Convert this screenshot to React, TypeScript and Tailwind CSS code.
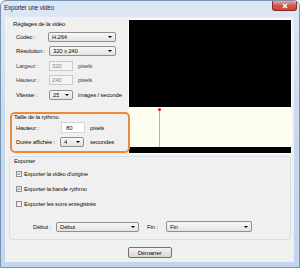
import clsx from 'clsx';

function Arrow() {
  return <span className="ml-auto w-0 h-0 border-x-[2px] border-t-[2.5px] border-x-transparent border-t-black" />;
}

function Combo({ value, className }: { value: string; className?: string }) {
  return (
    <div
      className={clsx(
        'flex items-center border border-[#8e8f8f] rounded-[2px] bg-linear-to-b from-[#f8f8f8] to-[#e3e3e3] pl-[3px] pr-[3px]',
        className,
      )}
    >
      <span className="truncate">{value}</span>
      <Arrow />
    </div>
  );
}

function TextBox({ value, disabled, className }: { value: string; disabled?: boolean; className?: string }) {
  return (
    <div
      className={clsx(
        'flex items-center border pl-[2px]',
        disabled ? 'border-[#c9c9c9] bg-[#f4f4f4] text-[#8a8a8a]' : 'border-[#d6d6d6] bg-white',
        className,
      )}
    >
      {value}
    </div>
  );
}

function CheckBox({ label, checked, className }: { label: string; checked?: boolean; className?: string }) {
  return (
    <div className={clsx('h-[8px] flex items-center gap-[2px] pl-[6px]', className)}>
      <span className="w-[6px] h-[6px] border border-[#8f8f8f] bg-linear-to-br from-[#dcdcdc] to-white flex items-center justify-center">
        {checked && (
          <svg width="6" height="6" viewBox="0 0 6 6">
            <path d="M1 3.1 L2.4 4.5 L5 1.3" stroke="#2c4377" strokeWidth="1" fill="none" />
          </svg>
        )}
      </span>
      <span>{label}</span>
    </div>
  );
}

export default function App() {
  return (
    <div className="w-[300px] h-[268px] flex flex-col overflow-hidden rounded-t-[6px] border border-[#7a93b3] bg-linear-to-b from-[#dde8f5] via-[#c8d9ee] to-[#c2d5ec] font-['Liberation_Sans',Arial,sans-serif] text-[6px] leading-none tracking-[-0.2px] text-[#111]">
      {/* Title bar */}
      <div className="h-[16px] shrink-0 flex items-start">
        <span className="mt-[4px] ml-[3px] text-[6.4px] text-[#1b2a3e]">Exporter une vidéo</span>
        <div className="ml-auto mr-[2px] w-[25px] h-[10px] rounded-b-[3px] border border-t-0 border-[#8a2a22] bg-linear-to-b from-[#eaa99c] via-[#d0574b] to-[#c9463a] flex items-center justify-center">
          <svg width="8" height="6" viewBox="0 0 8 6">
            <path d="M2 1 L6 5 M6 1 L2 5" stroke="white" strokeWidth="1.4" />
          </svg>
        </div>
      </div>

      {/* Client area */}
      <div className="ml-[4px] w-[289px] h-[245px] bg-[#f0f0f0] flex flex-col">
        {/* Top section */}
        <div className="h-[138px] flex shrink-0">
          {/* Left settings */}
          <div className="ml-[4px] w-[121px] flex flex-col">
            <div className="mt-[2px] h-[10px] pl-[4px] flex items-center">Réglages de la vidéo</div>

            <div className="mt-[3px] h-[10px] flex items-stretch">
              <span className="w-[39px] pl-[7px] flex items-center">Codec :</span>
              <Combo value="H.264" className="w-[68px]" />
            </div>
            <div className="mt-[4px] h-[10px] flex items-stretch">
              <span className="w-[40px] pl-[7px] flex items-center">Résolution :</span>
              <Combo value="320 x 240" className="w-[67px]" />
            </div>
            <div className="mt-[5px] h-[10px] flex items-stretch">
              <span className="w-[40px] pl-[7px] flex items-center text-[#444]">Largeur :</span>
              <TextBox value="320" disabled className="w-[24px]" />
              <span className="ml-[5px] flex items-center text-[#444]">pixels</span>
            </div>
            <div className="mt-[4px] h-[10px] flex items-stretch">
              <span className="w-[40px] pl-[7px] flex items-center text-[#444]">Hauteur :</span>
              <TextBox value="240" disabled className="w-[24px]" />
              <span className="ml-[5px] flex items-center text-[#444]">pixels</span>
            </div>
            <div className="mt-[5px] h-[10px] flex items-stretch">
              <span className="w-[40px] pl-[7px] flex items-center">Vitesse :</span>
              <Combo value="25" className="w-[24px]" />
              <span className="ml-[5px] flex items-center">images / seconde</span>
            </div>

            {/* Rythmo group (highlighted) */}
            <div className="relative z-10 mt-[12px] ml-[1px] w-[120px] h-[41px] border-[2px] border-[#ec8a3c] rounded-[5px] flex flex-col">
              <div className="h-[6px] pl-[2px] flex items-center">Taille de la rythmo</div>
              <div className="mt-[2px] h-[11px] flex items-stretch">
                <span className="w-[49px] pl-[4px] flex items-center">Hauteur :</span>
                <TextBox value="80" className="w-[24px] pl-[4px]" />
                <span className="ml-[5px] flex items-center">pixels</span>
              </div>
              <div className="mt-[4px] h-[10px] flex items-stretch">
                <span className="w-[48px] pl-[4px] flex items-center">Durée affichée :</span>
                <Combo value="4" className="w-[24px]" />
                <span className="ml-[6px] flex items-center">secondes</span>
              </div>
            </div>
          </div>

          {/* Preview */}
          <div className="ml-[-2px] mt-[2px] w-[164px] h-[135px] border border-white bg-black flex flex-col">
            <div className="h-[87px] shrink-0" />
            <div className="relative h-[40px] shrink-0 bg-[#fdfdf0]">
              <div className="absolute left-[30px] top-[2px] bottom-0 w-[1px] bg-[#f09a9a]" />
              <div className="absolute left-[29px] top-[1px] w-[3px] h-[3px] rounded-full bg-[#e01818]" />
            </div>
          </div>
        </div>

        {/* Exporter group */}
        <div className="mt-[1px] ml-[4px] w-[282px] h-[84px] border border-[#d5dfe5] rounded-[3px] flex flex-col shrink-0">
          <div className="h-[8px] pl-[4px] flex items-center">Exporter</div>
          <CheckBox className="mt-[5px]" checked label="Exporter la vidéo d'origine" />
          <CheckBox className="mt-[7px]" checked label="Exporter la bande rythmo" />
          <CheckBox className="mt-[7px]" label="Exporter les sons enregistrés" />
          <div className="mt-[13px] h-[11px] flex items-center pl-[23px]">
            <span className="w-[23px]">Début :</span>
            <Combo value="Début" className="w-[83px] h-[10px]" />
            <span className="ml-[8px] w-[19px]">Fin :</span>
            <Combo value="Fin" className="w-[86px] h-[11px]" />
          </div>
        </div>

        {/* Start button */}
        <div className="mt-[7px] self-center w-[44px] h-[11px] border border-[#707070] rounded-[2px] bg-linear-to-b from-[#f3f3f3] via-[#e6e6e6] to-[#d6d6d6] flex items-center justify-center">
          Démarrer
        </div>
      </div>
    </div>
  );
}
